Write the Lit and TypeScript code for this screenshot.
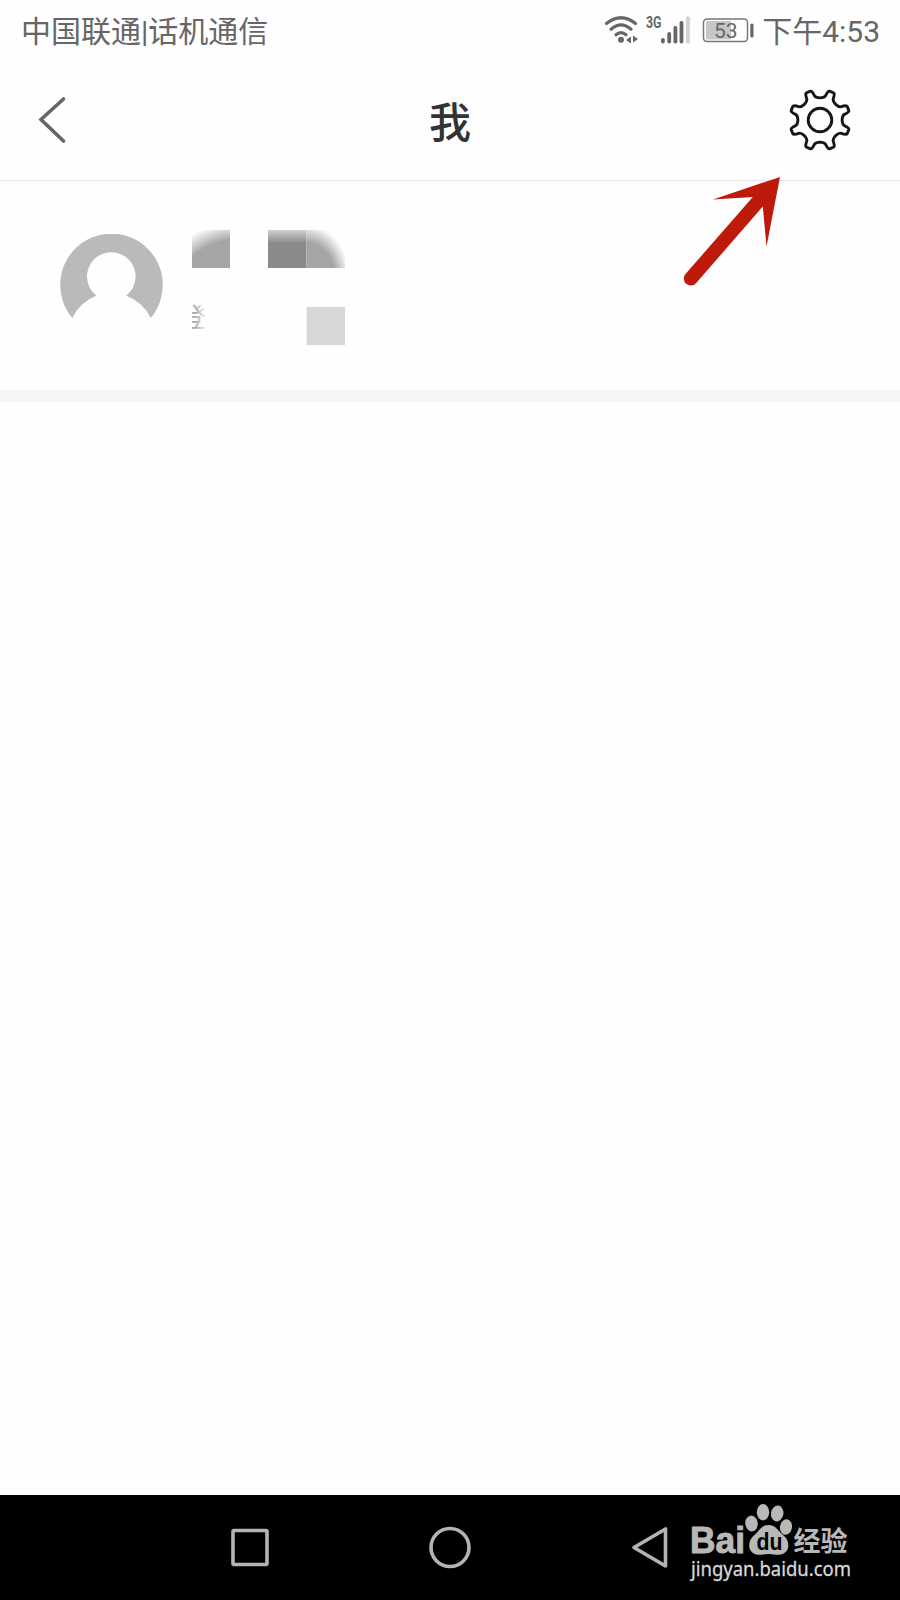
import { LitElement, html, css } from "lit";
import { customElement } from "lit/decorators.js";

const gearPath = (): string => {
  const valley = [[-9.6, -28.8], [-8, -29.4], [-5.6, -24.4], [-4.6, -22.3], [0, -22.1], [4.6, -22.3], [5.6, -24.4], [8, -29.4], [9.6, -28.8]];
  let d = "";
  for (let i = 0; i < 8; i++) {
    const a = (i * Math.PI) / 4;
    const p = valley.map(([x, y]) =>
      `${(x * Math.cos(a) - y * Math.sin(a)).toFixed(2)} ${(x * Math.sin(a) + y * Math.cos(a)).toFixed(2)}`);
    d += `${i ? "L" : "M"}${p[0]}Q${p[1]} ${p[2]}Q${p[3]} ${p[4]}Q${p[5]} ${p[6]}Q${p[7]} ${p[8]}`;
  }
  return d + "Z";
};

@customElement("status-bar")
class StatusBar extends LitElement {
  static styles = css`
    :host { display: flex; height: 60px; padding: 0 20px 0 21px; box-sizing: border-box; align-items: center;
      font: 30px/60px Roboto, "Noto Sans CJK SC", sans-serif; color: #666; }
    .carrier { flex: 1; white-space: nowrap; padding-top: 4px; }
    .icons { display: block; margin-right: 7px; }
    .time { white-space: nowrap; padding-top: 3px; }
    .num { font: 21px Roboto, sans-serif; }
    .net { font: bold 16px Roboto, sans-serif; }
  `;
  render() {
    return html`<div class="carrier">中国联通|话机通信</div>
      <svg class="icons" width="155" height="60" viewBox="600 0 155 60" fill="#666">
        <g fill="none" stroke="#666" stroke-width="3.2" stroke-linecap="round">
          <path d="M606.500 23.500Q621 12 635.500 23.500" />
          <path d="M611 29.300Q621 20.500 631 29.300" />
          <path d="M616 34.800Q621 30.500 626 34.800" />
        </g>
        <circle cx="621" cy="39.800" r="3" />
        <path d="M631 36.500v7l-5-3.500zM633 35.500v7l5-3.500z" />
        <text class="net" x="646" y="28" textLength="15.500" lengthAdjust="spacingAndGlyphs">3G</text>
        <rect x="661" y="38" width="3.800" height="5.500" rx="1.800" />
        <rect x="667.300" y="32" width="3.800" height="11.500" rx="1.800" />
        <rect x="673.500" y="26" width="3.800" height="17.500" rx="1.800" />
        <rect x="679.600" y="21" width="3.800" height="22.500" rx="1.800" />
        <rect x="686" y="16.500" width="3.800" height="27" rx="1" fill="#d2d2d2" />
        <rect x="706" y="21" width="25" height="18.500" fill="#c6c6c6" />
        <rect x="703.500" y="19" width="44" height="22.500" rx="3.500" fill="none" stroke="#777" stroke-width="1.500" />
        <rect x="750.300" y="23.500" width="3.200" height="14" rx="1.500" />
        <text class="num" x="714" y="37.800" textLength="23.500">53</text>
      </svg>
      <div class="time">下午4:53</div>`;
  }
}

@customElement("title-bar")
class TitleBar extends LitElement {
  static styles = css`
    :host { display: grid; grid-template-columns: 100px 1fr 100px; align-items: center; height: 121px;
      box-sizing: border-box; border-bottom: 1px solid #e4e4e4; }
    .back { margin-left: 35px; }
    .title { text-align: center; font: 500 42px/60px "Noto Sans CJK SC", sans-serif; color: #333; }
    .gear { margin-left: -14px; }
  `;
  render() {
    return html`<svg class="back" width="34" height="52" viewBox="0 0 34 52">
        <path d="M28.500 5L6 25.500L28.500 47" fill="none" stroke="#666" stroke-width="3.600" stroke-linecap="round" />
      </svg>
      <div class="title">我</div>
      <svg class="gear" width="68" height="68" viewBox="-34 -34 68 68" fill="none" stroke="#161616" stroke-width="2.900" stroke-linejoin="round">
        <path d=${gearPath()} /><circle r="11.800" />
      </svg>`;
  }
}

@customElement("profile-card")
class ProfileCard extends LitElement {
  static styles = css`
    :host { display: flex; height: 221px; box-sizing: border-box; padding: 49px 0 0 60px; border-bottom: 12px solid #f6f6f6; }
    .avatar { margin-top: 4px; }
    .info { margin-left: 28px; }
    .login { font: 26px "Noto Sans CJK SC", sans-serif; fill: #aaa; }
  `;
  render() {
    return html`<svg class="avatar" width="104" height="90" viewBox="60 234 104 90">
        <path fill="#b9bab9" d="M72.300 318A51.300 51.300 0 1 1 150.700 318A43.500 43.500 0 0 0 126.300 295.700A24.300 24.300 0 1 0 96.300 295.700A43.500 43.500 0 0 0 72.300 318Z" />
      </svg>
      <svg class="info" width="153" height="115" viewBox="0 0 153 115">
        <defs>
          <radialGradient id="a" gradientUnits="userSpaceOnUse" cx="0" cy="0" r="1" gradientTransform="translate(45 60) scale(78 68)">
            <stop offset=".74" stop-color="#a5a5a5" /><stop offset="1" stop-color="#fff" />
          </radialGradient>
          <linearGradient id="b" x2="0" y2="1">
            <stop offset="0" stop-color="#d0d0d0" /><stop offset=".35" stop-color="#8a8a8a" />
          </linearGradient>
          <radialGradient id="c" gradientUnits="userSpaceOnUse" cx="0" cy="0" r="1" gradientTransform="translate(114 48) scale(44 54)">
            <stop offset=".66" stop-color="#a5a5a5" /><stop offset="1" stop-color="#fff" />
          </radialGradient>
          <linearGradient id="f"><stop offset=".1" stop-color="#fff" stop-opacity="0" /><stop offset=".4" stop-color="#fdfdfd" /></linearGradient>
          <clipPath id="k"><rect y="74" width="16" height="27" /></clipPath>
        </defs>
        <rect width="38" height="38" fill="url(#a)" />
        <rect x="76" width="38.500" height="38" fill="url(#b)" />
        <rect x="114.500" width="38.500" height="38" fill="url(#c)" />
        <g clip-path="url(#k)"><text class="login" x="-12" y="97">登</text></g>
        <rect y="74" width="38" height="34" fill="url(#f)" />
        <rect x="114.500" y="77" width="38.500" height="38" fill="#d7d7d7" />
      </svg>`;
  }
}

@customElement("nav-bar")
class NavBar extends LitElement {
  static styles = css`
    :host { display: flex; height: 105px; background: #000; }
    .cn { font: bold 27px "Noto Sans CJK SC", sans-serif; }
    .bai { font: bold 36px "Liberation Sans", sans-serif; stroke: #b8b8b8; stroke-width: 1px; }
    .du { font: bold 23px "Liberation Sans", sans-serif; fill: #000; }
    .url { font: 20px "Noto Sans", sans-serif; fill: #d8d8d8; stroke: #d8d8d8; stroke-width: .3px; }
  `;
  render() {
    return html`<svg width="900" height="105" viewBox="0 1495 900 105" fill="#b8b8b8">
        <g fill="none" stroke="#b4b4b4" stroke-width="3.600" stroke-linejoin="round">
          <rect x="233" y="1530.500" width="34" height="34" rx="1" />
          <circle cx="450" cy="1547.500" r="19" />
          <path d="M665.500 1529V1566L634 1547.500Z" />
        </g>
        <text class="bai" x="690" y="1553.200" textLength="55" lengthAdjust="spacingAndGlyphs">Bai</text>
        <ellipse cx="751.500" cy="1523.500" rx="6.200" ry="7.900" transform="rotate(-8 751.500 1523.500)" />
        <ellipse cx="763" cy="1512.200" rx="6.200" ry="8.200" />
        <ellipse cx="777.200" cy="1513.500" rx="6.200" ry="8" transform="rotate(10 777.200 1513.500)" />
        <ellipse cx="786" cy="1527" rx="6" ry="7.900" transform="rotate(8 786 1527)" />
        <path d="M768.500 1525C761 1525 759 1531 755 1534.500C750 1538.500 748.500 1543 749.500 1548C751 1554 757 1555.500 763 1554.500C767 1553.800 770 1553.800 774 1554.500C780 1555.500 786.500 1554 788 1548C789 1543 787.500 1538.500 782.500 1534.500C778 1531 776 1525 768.500 1525Z" />
        <text class="du" x="756.500" y="1549.500" textLength="26" lengthAdjust="spacingAndGlyphs">du</text>
        <text class="cn" x="793.500" y="1551">经验</text>
        <text class="url" x="691" y="1575.500" textLength="160" lengthAdjust="spacingAndGlyphs">jingyan.baidu.com</text>
      </svg>`;
  }
}

@customElement("app-root")
class AppRoot extends LitElement {
  static styles = css`
    :host { display: flex; flex-direction: column; position: relative; width: 900px; height: 1600px; background: #fefefe; overflow: hidden; }
    .body { flex: 1; }
    .arrow { position: absolute; left: 680px; top: 170px; }
  `;
  render() {
    return html`<status-bar></status-bar><title-bar></title-bar><profile-card></profile-card>
      <div class="body"></div><nav-bar></nav-bar>
      <svg class="arrow" width="110" height="120" viewBox="680 170 110 120" fill="#bd1a0b">
        <path d="M780 177L713 199.500L752.800 197L685.500 274A6.700 6.700 0 0 0 696 283.200L762.800 206.500L766.500 246.500Z" />
      </svg>`;
  }
}
